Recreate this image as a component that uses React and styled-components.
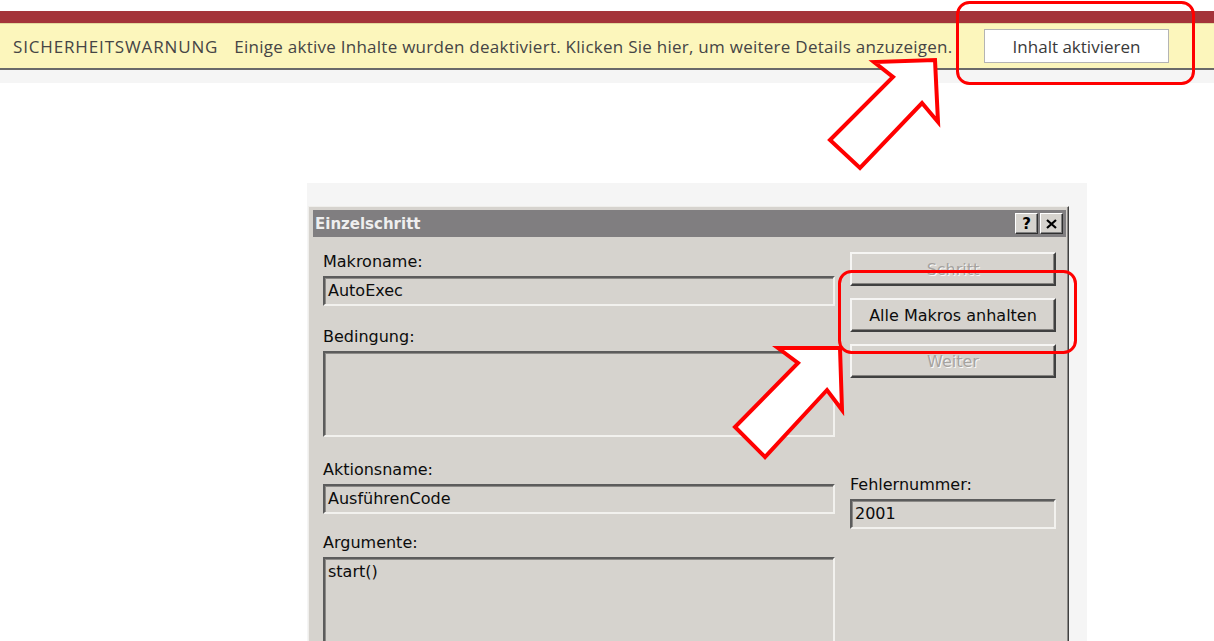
import React from "react";
import styled, { createGlobalStyle } from "styled-components";

const GlobalStyle = createGlobalStyle`
  html, body {
    margin: 0;
    padding: 0;
    background: #ffffff;
  }
  body {
    overflow: hidden;
  }
`;

const Page = styled.div`
  position: relative;
  width: 1214px;
  height: 641px;
  overflow: hidden;
  background: #ffffff;
`;

const TitleStripe = styled.div`
  margin-top: 11px;
  height: 12px;
  background: #a4343a;
`;

const MessageBar = styled.div`
  height: 44px;
  display: flex;
  align-items: center;
  gap: 16px;
  padding: 0 45px 0 13px;
  background: #fcf6bc;
  border-top: 1px solid #e2da9e;
  border-bottom: 2px solid #6a6a6a;
  font-family: "Open Sans", "Noto Sans", sans-serif;
  font-size: 17px;
  color: #454545;
`;

const BarTitle = styled.span`
  letter-spacing: 0.85px;
`;

const BarText = styled.span`
  white-space: nowrap;
  letter-spacing: 0.26px;
`;

const BarButton = styled.button`
  margin-left: auto;
  width: 185px;
  height: 34px;
  background: #ffffff;
  border: 1px solid #b4b4b4;
  font-family: "Open Sans", "Noto Sans", sans-serif;
  font-size: 17px;
  color: #3a3a3a;
  padding: 0;
`;

const ShadowStrip = styled.div`
  height: 13px;
  background: #f5f5f5;
`;

const DialogArea = styled.div`
  margin: 100px 0 0 307px;
  width: 761px;
  height: 435px;
  padding: 23px 18px 0 1px;
  background: #f5f5f5;
`;

const Window = styled.div`
  height: 100%;
  padding: 3px 2px 0 4px;
  background: #d6d3ce;
  border-top: 1px solid #efeeeb;
  border-left: 1px solid #efeeeb;
  border-right: 1px solid #404040;
  box-shadow: inset -1px 0 0 #8a8886;
  font-family: "DejaVu Sans", Verdana, sans-serif;
`;

const TitleBar = styled.div`
  height: 27px;
  display: flex;
  align-items: center;
  padding: 0 3px 0 2px;
  background: #807e80;
  color: #eeeeee;
  font-weight: bold;
  font-size: 15px;
`;

const CaptionButtons = styled.div`
  margin-left: auto;
  display: flex;
  gap: 2px;
`;

const CaptionButton = styled.div`
  width: 23px;
  height: 21px;
  box-sizing: border-box;
  display: flex;
  align-items: center;
  justify-content: center;
  background: #d6d3ce;
  border: 1px solid;
  border-color: #ffffff #303030 #303030 #ffffff;
  box-shadow: inset -1px -1px 0 #808080;
  color: #000;
  font-size: 15px;
  font-weight: bold;
`;

const Body = styled.div`
  display: grid;
  grid-template-columns: 512px 206px;
  column-gap: 15px;
  padding-left: 10px;
`;

const Column = styled.div`
  display: flex;
  flex-direction: column;
`;

const Label = styled.div`
  height: 18px;
  line-height: 18px;
  margin-top: ${p => p.$top}px;
  margin-bottom: 5px;
  font-size: 16px;
  color: #0c0c0c;
`;

const Field = styled.div`
  height: ${p => p.$h}px;
  box-sizing: border-box;
  display: flex;
  align-items: ${p => (p.$multi ? "flex-start" : "center")};
  padding: ${p => (p.$multi ? "4px 3px" : "0 3px")};
  border: 2px solid;
  border-color: #5c5c5c #f2f1ee #f2f1ee #5c5c5c;
  box-shadow: inset 1px 1px 0 #8c8a87;
  background: #d6d3ce;
  font-size: 16px;
  line-height: 18px;
  color: #0c0c0c;
`;

const DlgButton = styled.div`
  height: 34px;
  margin-top: ${p => p.$top}px;
  box-sizing: border-box;
  display: flex;
  align-items: center;
  justify-content: center;
  border: 2px solid;
  border-color: #f6f5f3 #404040 #404040 #f6f5f3;
  box-shadow: inset -1px -1px 0 #858380;
  background: #d6d3ce;
  font-size: 16px;
  color: ${p => (p.$disabled ? "#a6a39f" : "#0c0c0c")};
  text-shadow: ${p => (p.$disabled ? "1px 1px 0 #fafafa" : "none")};
`;

const Overlay = styled.svg`
  position: absolute;
  top: 0;
  left: 0;
  pointer-events: none;
`;

const arrowTop = "935,60 938,122 922,103 860,168 830,140 893,77 874,62";
const arrowDialog = "840,348 842,410 827,390 765,457 735,427 798,363 778,348";

export default function App() {
  return (
    <Page>
      <GlobalStyle />
      <TitleStripe />
      <MessageBar>
        <BarTitle>SICHERHEITSWARNUNG</BarTitle>
        <BarText>
          Einige aktive Inhalte wurden deaktiviert. Klicken Sie hier, um weitere Details anzuzeigen.
        </BarText>
        <BarButton>Inhalt aktivieren</BarButton>
      </MessageBar>
      <ShadowStrip />

      <DialogArea>
        <Window>
          <TitleBar>
            Einzelschritt
            <CaptionButtons>
              <CaptionButton>?</CaptionButton>
              <CaptionButton>
                <svg width="11" height="10" viewBox="0 0 11 10">
                  <path d="M1 1 L10 9 M10 1 L1 9" stroke="#000" strokeWidth="2.2" />
                </svg>
              </CaptionButton>
            </CaptionButtons>
          </TitleBar>
          <Body>
            <Column>
              <Label $top={16}>Makroname:</Label>
              <Field $h={30}>AutoExec</Field>
              <Label $top={22}>Bedingung:</Label>
              <Field $h={86} $multi />
              <Label $top={24}>Aktionsname:</Label>
              <Field $h={30}>AusführenCode</Field>
              <Label $top={20}>Argumente:</Label>
              <Field $h={110} $multi>start()</Field>
            </Column>
            <Column>
              <DlgButton $top={15} $disabled>Schritt</DlgButton>
              <DlgButton $top={12}>Alle Makros anhalten</DlgButton>
              <DlgButton $top={12} $disabled>Weiter</DlgButton>
              <Label $top={98}>Fehlernummer:</Label>
              <Field $h={30}>2001</Field>
            </Column>
          </Body>
        </Window>
      </DialogArea>

      <Overlay width="1214" height="641" viewBox="0 0 1214 641">
        <rect x="957.5" y="2.5" width="236" height="81" rx="12" fill="none" stroke="#ff0000" strokeWidth="3" />
        <rect x="839.5" y="271.5" width="236" height="81" rx="12" fill="none" stroke="#ff0000" strokeWidth="3" />
        <polygon points={arrowTop} fill="#ffffff" stroke="#ff0000" strokeWidth="4" strokeLinejoin="miter" />
        <polygon points={arrowDialog} fill="#ffffff" stroke="#ff0000" strokeWidth="4" strokeLinejoin="miter" />
      </Overlay>
    </Page>
  );
}
